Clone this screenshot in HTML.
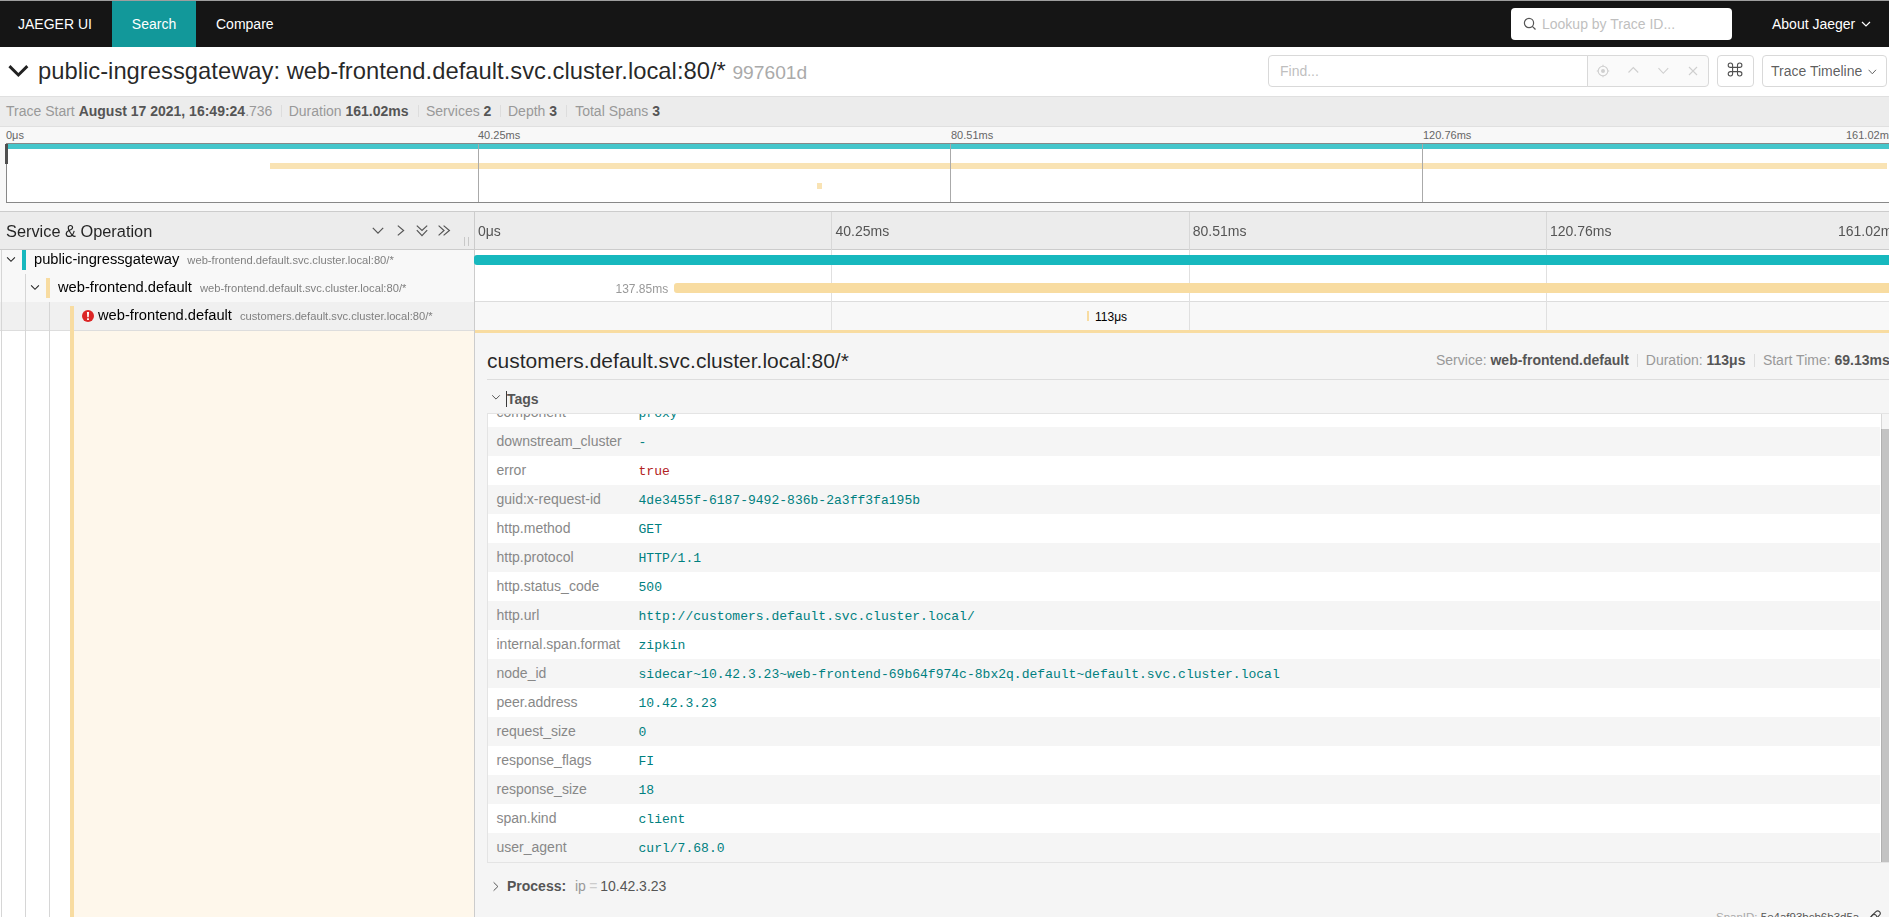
<!DOCTYPE html>
<html><head><meta charset="utf-8">
<style>
*{box-sizing:border-box;}
html,body{margin:0;padding:0;}
body{width:1889px;height:917px;overflow:hidden;position:relative;background:#fff;font-family:"Liberation Sans",sans-serif;font-size:14px;color:rgba(0,0,0,.85);}
.abs{position:absolute;}
.nw{white-space:nowrap;}
#topline{left:0;top:0;width:1889px;height:1px;background:#9e9e9e;}
#nav{left:0;top:1px;width:1889px;height:46px;background:#151515;color:#fff;}
#nav .item{position:absolute;top:0;height:46px;line-height:46px;font-size:14px;color:#fff;}
#search-tab{left:112px;width:84px;background:#12989a;text-align:center;}
#lookup{left:1511px;top:7px;width:221px;height:32px;background:#fff;border-radius:4px;}
#lookup .ph{position:absolute;left:31px;top:0;line-height:32px;color:#bfbfbf;font-size:14px;}
#titlerow{left:0;top:47px;width:1889px;height:49px;background:#fff;}
#title{left:38px;top:-1px;line-height:49px;font-size:23.8px;color:rgba(0,0,0,.85);}
#title .tid{color:#aaa;font-size:19.2px;}
#find{left:1268px;top:55px;width:320px;height:32px;border:1px solid #d9d9d9;border-radius:4px 0 0 4px;background:#fff;}
#find .ph{position:absolute;left:11px;top:0;line-height:30px;color:#bfbfbf;}
#findbtns{left:1587px;top:55px;width:122px;height:32px;border:1px solid #d9d9d9;border-radius:0 4px 4px 0;background:#fafafa;}
#cmdbtn{left:1717px;top:55px;width:37px;height:32px;border:1px solid #d9d9d9;border-radius:4px;background:#fff;text-align:center;line-height:30px;font-size:18px;color:rgba(0,0,0,.85);}
#ttl{left:1762px;top:55px;width:125px;height:32px;border:1px solid #d9d9d9;border-radius:4px;background:#fff;}
#ttl .t{position:absolute;left:8px;top:0;line-height:30px;color:rgba(0,0,0,.65);}
#summary{left:0;top:96px;width:1889px;height:31px;background:#ececec;border-top:1px solid #e0e0e0;border-bottom:1px solid #e0e0e0;}
#summary .s{position:absolute;left:6px;top:0;line-height:29px;color:#999;font-size:14px;}
#summary b{color:#555;}
#summary .sep{position:absolute;top:8px;width:1px;height:12px;background:#ddd;}
#minimap{left:0;top:127px;width:1889px;height:84px;background:#f8f8f8;}
.mlabel{position:absolute;top:2px;font-size:11px;color:#666;line-height:12px;}
#canvas{left:6px;top:143px;width:1888px;height:60px;background:#fff;border:1px solid #888;overflow:hidden;}
.mm-tick{position:absolute;top:0;width:1px;height:58px;background:#aaa;}
#tlhead{will-change:transform;left:0;top:211px;width:1889px;height:39px;background:#ececec;border-top:1px solid #ccc;border-bottom:1px solid #ccc;}
#tlhead .so{position:absolute;left:6px;top:1px;line-height:37px;font-size:16.35px;color:rgba(0,0,0,.85);}
.hdr-tick{position:absolute;top:0;width:1px;height:38px;background:#d8d8d8;}
.hdr-lbl{position:absolute;top:1px;line-height:37px;font-size:14px;color:#555;}
.vline{position:absolute;width:1px;background:#d6d6d6;}
.rowL{position:absolute;left:0;width:474px;height:28px;}
.rowR{position:absolute;left:475px;width:1414px;height:28px;background:#fff;}
.tick{position:absolute;top:0;width:1px;height:28px;background:#e0e0e0;}
.svc{position:absolute;font-size:14.7px;color:#000;line-height:28px;top:0;}
.op{font-size:11.2px;color:#808080;margin-left:8px;}
.marker{position:absolute;top:4px;width:4px;height:20px;}
.chev{position:absolute;}
#detailL{left:0;top:331px;width:474px;height:586px;background:#fff;}
#detailR{left:475px;top:330px;width:1414px;height:587px;background:#f5f5f5;border-top:3px solid #f8dca1;}
.kvrow{position:absolute;left:0;width:1392px;height:29px;}
.kvrow .k{position:absolute;left:8.5px;top:0;line-height:29px;color:#888;font-size:14px;}
.msep{display:inline-block;width:1px;height:12px;background:#ddd;vertical-align:middle;margin:0 8px 0 9px;}
.dm{top:352px;line-height:16px;font-size:14px;color:#999;}
.dm b{color:#555;}
.dsep{top:354px;width:1px;height:13px;background:#ddd;}
.pr{top:878px;line-height:16px;font-size:14px;}
.kvrow .v{position:absolute;left:150.5px;top:1px;line-height:29px;color:#008080;font-family:"Liberation Mono",monospace;font-size:13.04px;}
</style></head>
<body>
<div id="topline" class="abs"></div>
<div id="nav" class="abs">
  <div class="item" style="left:18px;">JAEGER UI</div>
  <div class="item" id="search-tab">Search</div>
  <div class="item" style="left:216px;">Compare</div>
  <div id="lookup" class="abs">
    <svg class="abs" style="left:12px;top:9px" width="14" height="14" viewBox="0 0 14 14"><circle cx="6" cy="6" r="4.6" fill="none" stroke="#555" stroke-width="1.2"/><line x1="9.3" y1="9.3" x2="12.5" y2="12.5" stroke="#555" stroke-width="1.2"/></svg>
    <div class="ph nw">Lookup by Trace ID...</div>
  </div>
  <div class="item" style="left:1772px;">About Jaeger</div>
  <svg class="abs" style="left:1861px;top:20px" width="10" height="6" viewBox="0 0 10 6"><polyline points="1,1 5,5 9,1" fill="none" stroke="#fff" stroke-width="1.2"/></svg>
</div>
<div id="titlerow" class="abs">
  <svg class="abs" style="left:8px;top:17px" width="22" height="15" viewBox="0 0 22 15"><polyline points="1.43,2.1 10.38,11.05 19.33,2.1" fill="none" stroke="#222" stroke-width="2.9" stroke-linejoin="miter"/></svg>
  <div id="title" class="abs nw">public-ingressgateway: web-frontend.default.svc.cluster.local:80/* <span class="tid">997601d</span></div>
</div>
<div id="find" class="abs"><div class="ph">Find...</div></div>
<div id="findbtns" class="abs">
  <svg class="abs" style="left:7.5px;top:8px" width="14" height="14" viewBox="0 0 14 14"><circle cx="7" cy="7" r="4.8" fill="none" stroke="#cfcfcf" stroke-width="1.1"/><circle cx="7" cy="7" r="2" fill="#cfcfcf"/><line x1="7" y1="0.8" x2="7" y2="2.2" stroke="#cfcfcf" stroke-width="1.1"/><line x1="7" y1="11.8" x2="7" y2="13.2" stroke="#cfcfcf" stroke-width="1.1"/><line x1="0.8" y1="7" x2="2.2" y2="7" stroke="#cfcfcf" stroke-width="1.1"/><line x1="11.8" y1="7" x2="13.2" y2="7" stroke="#cfcfcf" stroke-width="1.1"/></svg>
  <svg class="abs" style="left:40px;top:10px" width="11" height="8" viewBox="0 0 11 8"><polyline points="0.5,6.5 5.3,1.5 10.2,6.5" fill="none" stroke="#cfcfcf" stroke-width="1.1"/></svg>
  <svg class="abs" style="left:70px;top:11px" width="11" height="8" viewBox="0 0 11 8"><polyline points="0.5,1.2 5.3,6.3 10.2,1.2" fill="none" stroke="#cfcfcf" stroke-width="1.1"/></svg>
  <svg class="abs" style="left:100px;top:10px" width="10" height="10" viewBox="0 0 10 10"><line x1="1" y1="1" x2="9" y2="9" stroke="#cfcfcf" stroke-width="1.1"/><line x1="9" y1="1" x2="1" y2="9" stroke="#cfcfcf" stroke-width="1.1"/></svg>
</div>
<div id="cmdbtn" class="abs"><svg class="abs" style="left:9px;top:5px" width="18" height="18" viewBox="0 0 18 18"><path d="M5.6,6.4 H10.5 V10.6 H5.6 Z M5.6,6.4 V4.2 A2.2,2.2 0 1 0 3.3999999999999995,6.4 H5.6 M10.5,6.4 V4.2 A2.2,2.2 0 1 1 12.7,6.4 H10.5 M10.5,10.6 V12.8 A2.2,2.2 0 1 0 12.7,10.6 H10.5 M5.6,10.6 V12.8 A2.2,2.2 0 1 1 3.3999999999999995,10.6 H5.6" fill="none" stroke="#505050" stroke-width="1.1"/></svg></div>
<div id="ttl" class="abs"><div class="t nw">Trace Timeline</div><svg class="abs" style="left:105px;top:13px" width="9" height="6" viewBox="0 0 9 6"><polyline points="0.6,0.8 4.3,4.8 8,0.8" fill="none" stroke="#666" stroke-width="1"/></svg></div>
<div id="summary" class="abs">
<div class="s nw" style="left:6px">Trace Start <b>August 17 2021, 16:49:24</b>.736</div>
<span class="sep" style="left:281px"></span>
<div class="s nw" style="left:288.7px">Duration <b>161.02ms</b></div>
<span class="sep" style="left:418px"></span>
<div class="s nw" style="left:426px">Services <b>2</b></div>
<span class="sep" style="left:500px"></span>
<div class="s nw" style="left:508px">Depth <b>3</b></div>
<span class="sep" style="left:566px"></span>
<div class="s nw" style="left:575.2px">Total Spans <b>3</b></div>
</div>
<div id="minimap" class="abs">
  <div class="mlabel" style="left:6px">0μs</div>
  <div class="mlabel" style="left:478px">40.25ms</div>
  <div class="mlabel" style="left:951px">80.51ms</div>
  <div class="mlabel" style="left:1423px">120.76ms</div>
  <div class="mlabel" style="left:1846px">161.02ms</div>
</div>
<div id="canvas" class="abs">
  <div class="abs" style="left:0;top:0;width:1890px;height:5px;background:#45c6cb;"></div>
  <div class="abs" style="left:263px;top:19px;width:1617px;height:6px;background:#f9e3b4;"></div>
  <div class="abs" style="left:810px;top:39px;width:5px;height:6px;background:#f9e3b4;"></div>
  <div class="mm-tick" style="left:471px"></div>
  <div class="mm-tick" style="left:943px"></div>
  <div class="mm-tick" style="left:1415px"></div>
</div>
<div class="abs" style="left:5px;top:144px;width:3px;height:20px;background:#505050;"></div>
<div id="tlhead" class="abs">
  <div class="so nw">Service &amp; Operation</div>
  <svg class="abs" style="left:372px;top:15px" width="12" height="8" viewBox="0 0 12 8"><polyline points="0.8,0.8 6,6.2 11.2,0.8" fill="none" stroke="#555" stroke-width="1.2"/></svg>
  <svg class="abs" style="left:397px;top:13px" width="8" height="11" viewBox="0 0 8 11"><polyline points="0.8,0.6 6.6,5.5 0.8,10.4" fill="none" stroke="#555" stroke-width="1.2"/></svg>
  <svg class="abs" style="left:416px;top:13px" width="12" height="12" viewBox="0 0 12 12"><polyline points="0.8,0.6 6,5.4 11.2,0.6" fill="none" stroke="#555" stroke-width="1.2"/><polyline points="0.8,5.2 6,10.6 11.2,5.2" fill="none" stroke="#555" stroke-width="1.2"/></svg>
  <svg class="abs" style="left:438px;top:13px" width="13" height="11" viewBox="0 0 13 11"><polyline points="0.6,0.6 6,5.5 0.6,10.4" fill="none" stroke="#555" stroke-width="1.2"/><polyline points="5.6,0.6 11.4,5.5 5.6,10.4" fill="none" stroke="#555" stroke-width="1.2"/></svg>
  <div class="abs" style="left:464px;top:25px;width:1px;height:9px;background:#c8c8c8"></div>
  <div class="abs" style="left:468px;top:25px;width:1px;height:9px;background:#c8c8c8"></div>
  <div class="hdr-tick" style="left:474px;background:#ccc"></div>
  <div class="hdr-tick" style="left:831px"></div>
  <div class="hdr-tick" style="left:1189px"></div>
  <div class="hdr-tick" style="left:1546px"></div>
  <div class="hdr-lbl" style="left:478px">0μs</div>
  <div class="hdr-lbl" style="left:835.5px">40.25ms</div>
  <div class="hdr-lbl" style="left:1192.8px">80.51ms</div>
  <div class="hdr-lbl" style="left:1550px">120.76ms</div>
  <div class="hdr-lbl" style="left:1838px">161.02ms</div>
</div>

<!-- span rows -->
<div class="rowL" style="top:250px;height:24px;background:#f8f8f8;"></div>
<div class="rowL" style="top:274px;background:#f8f8f8;"></div>
<div class="rowL" style="top:302px;background:#f0f0f0;border-bottom:1px solid #ddd;height:29px;"></div>
<div class="abs" style="left:474px;top:250px;width:1px;height:667px;background:#ccc;"></div>
<div class="rowR" style="top:250px;height:24px;"></div>
<div class="rowR" style="top:274px;border-bottom:1px solid #ddd;"></div>
<div class="rowR" style="top:302px;background:#f8f8f8;"></div>
<div class="tick" style="left:831px;top:250px;height:80px"></div>
<div class="tick" style="left:1189px;top:250px;height:80px"></div>
<div class="tick" style="left:1546px;top:250px;height:80px"></div>

<div class="vline" style="left:1px;top:250px;height:667px;"></div>
<div class="vline" style="left:25px;top:274px;height:643px;"></div>
<div class="vline" style="left:49px;top:302px;height:615px;"></div>

<!-- row1 -->
<svg class="chev" style="left:6px;top:256px" width="10" height="7" viewBox="0 0 10 7"><polyline points="1.1,1.4 5,5.3 8.9,1.4" fill="none" stroke="#222" stroke-width="1.05"/></svg>
<div class="marker" style="left:22px;top:250px;background:#17b8be"></div>
<div class="svc nw" style="left:34px;top:245px">public-ingressgateway<span class="op">web-frontend.default.svc.cluster.local:80/*</span></div>
<div class="abs" style="left:474px;top:255px;width:1415px;height:10px;background:#17b8be;border-radius:3px 0 0 3px;"></div>
<!-- row2 -->
<svg class="chev" style="left:30px;top:284px" width="10" height="7" viewBox="0 0 10 7"><polyline points="1.1,1.4 5,5.3 8.9,1.4" fill="none" stroke="#222" stroke-width="1.05"/></svg>
<div class="marker" style="left:46px;top:278px;background:#f8dca1"></div>
<div class="svc nw" style="left:58px;top:273px">web-frontend.default<span class="op">web-frontend.default.svc.cluster.local:80/*</span></div>
<div class="abs nw" style="left:615.5px;top:275px;line-height:28px;font-size:12px;color:#999;">137.85ms</div>
<div class="abs" style="left:674px;top:283px;width:1215px;height:10px;background:#f8dca1;border-radius:3px 0 0 3px;"></div>
<!-- row3 -->
<div class="marker" style="left:70px;top:306px;height:611px;background:#f8dca1"></div>
<svg class="abs" style="left:82px;top:310px" width="12" height="12" viewBox="0 0 12 12"><circle cx="6" cy="6" r="6" fill="#dc2626"/><path d="M4.9,1.9 L7.1,1.9 L6.7,7.3 L5.3,7.3 Z" fill="#fff"/><rect x="5.1" y="8.3" width="1.8" height="1.7" fill="#fff"/></svg>
<div class="svc nw" style="left:98px;top:301px">web-frontend.default<span class="op">customers.default.svc.cluster.local:80/*</span></div>
<div class="abs" style="left:1087px;top:311px;width:2px;height:10px;background:#f8dca1;"></div>
<div class="abs nw" style="left:1095px;top:303px;line-height:28px;font-size:12px;color:#000;">113μs</div>

<!-- detail -->
<div class="abs" style="left:74px;top:331px;width:400px;height:586px;background:#fef7eb;"></div>
<div id="detailR" class="abs">
</div>
<!--DETAIL-->
<div class="abs nw" id="dtitle" style="left:487px;top:349px;line-height:24px;font-size:21px;color:rgba(0,0,0,.85);">customers.default.svc.cluster.local:80/*</div>
<div class="abs nw dm" style="left:1436px;">Service: <b>web-frontend.default</b></div>
<div class="abs dsep" style="left:1637px;"></div>
<div class="abs nw dm" style="left:1645.8px;">Duration: <b>113μs</b></div>
<div class="abs dsep" style="left:1754px;"></div>
<div class="abs nw dm" style="left:1762.9px;">Start Time: <b>69.13ms</b></div>
<div class="abs" style="left:487px;top:379px;width:1402px;height:1px;background:#ddd;"></div>
<svg class="abs" style="left:491px;top:394px" width="10" height="7" viewBox="0 0 10 7"><polyline points="1.2,1.3 5,5.1 8.8,1.3" fill="none" stroke="#555" stroke-width="1"/></svg>
<div class="abs" style="left:506px;top:391px;width:1px;height:16px;background:#3a3a3a;"></div>
<div class="abs nw" style="left:507px;top:391px;line-height:16px;font-size:14px;font-weight:bold;color:#555;">Tags</div>
<div class="abs" id="kvtable" style="left:487px;top:413px;width:1409px;height:450px;border:1px solid #e4e4e4;background:#fff;overflow:hidden;">
 <div class="abs" style="left:0;top:-16px;width:1392px;height:464px;">
<div class="kvrow" style="top:0px;background:#fff"><div class="k nw">component</div><div class="v nw">proxy</div></div>
<div class="kvrow" style="top:29px;background:#f5f5f5"><div class="k nw">downstream_cluster</div><div class="v nw">-</div></div>
<div class="kvrow" style="top:58px;background:#fff"><div class="k nw">error</div><div class="v nw" style="color:#b22222">true</div></div>
<div class="kvrow" style="top:87px;background:#f5f5f5"><div class="k nw">guid:x-request-id</div><div class="v nw">4de3455f-6187-9492-836b-2a3ff3fa195b</div></div>
<div class="kvrow" style="top:116px;background:#fff"><div class="k nw">http.method</div><div class="v nw">GET</div></div>
<div class="kvrow" style="top:145px;background:#f5f5f5"><div class="k nw">http.protocol</div><div class="v nw">HTTP/1.1</div></div>
<div class="kvrow" style="top:174px;background:#fff"><div class="k nw">http.status_code</div><div class="v nw">500</div></div>
<div class="kvrow" style="top:203px;background:#f5f5f5"><div class="k nw">http.url</div><div class="v nw">http://customers.default.svc.cluster.local/</div></div>
<div class="kvrow" style="top:232px;background:#fff"><div class="k nw">internal.span.format</div><div class="v nw">zipkin</div></div>
<div class="kvrow" style="top:261px;background:#f5f5f5"><div class="k nw">node_id</div><div class="v nw">sidecar~10.42.3.23~web-frontend-69b64f974c-8bx2q.default~default.svc.cluster.local</div></div>
<div class="kvrow" style="top:290px;background:#fff"><div class="k nw">peer.address</div><div class="v nw">10.42.3.23</div></div>
<div class="kvrow" style="top:319px;background:#f5f5f5"><div class="k nw">request_size</div><div class="v nw">0</div></div>
<div class="kvrow" style="top:348px;background:#fff"><div class="k nw">response_flags</div><div class="v nw">FI</div></div>
<div class="kvrow" style="top:377px;background:#f5f5f5"><div class="k nw">response_size</div><div class="v nw">18</div></div>
<div class="kvrow" style="top:406px;background:#fff"><div class="k nw">span.kind</div><div class="v nw">client</div></div>
<div class="kvrow" style="top:435px;background:#f5f5f5"><div class="k nw">user_agent</div><div class="v nw">curl/7.68.0</div></div>
 </div>
 <div class="abs" style="left:1393px;top:0;width:15px;height:448px;background:#f5f5f5;border-left:1px solid #d8d8d8;"></div>
 <div class="abs" style="left:1393px;top:15px;width:15px;height:433px;background:#c3c3c3;border-left:1px solid #b0b0b0;"></div>
</div>
<svg class="abs" style="left:492px;top:881px" width="8" height="11" viewBox="0 0 8 11"><polyline points="1.6,1.3 5.9,5.5 1.6,9.7" fill="none" stroke="#555" stroke-width="1"/></svg>
<div class="abs nw pr" style="left:507px;"><b style="color:#555">Process:</b></div>
<div class="abs nw pr" style="left:575px;color:#999">ip</div>
<div class="abs nw pr" style="left:589.2px;color:#ccc">=</div>
<div class="abs nw pr" style="left:600.2px;color:#555">10.42.3.23</div>
<svg class="abs" style="left:1862px;top:907px" width="22" height="14" viewBox="0 0 22 14"><g transform="rotate(-45 13 9)"><rect x="9.2" y="6.6" width="10" height="5" rx="2.5" fill="none" stroke="#444" stroke-width="1.1"/><rect x="4.2" y="6.6" width="10" height="5" rx="2.5" fill="none" stroke="#444" stroke-width="1.1"/></g></svg>
<div class="abs nw" style="left:1716px;top:910px;line-height:14px;font-size:11.5px;color:#aaa;">SpanID: <span style="color:#555">5e4af93bcb6b3d5a</span></div>
<!--/DETAIL-->
</body></html>
